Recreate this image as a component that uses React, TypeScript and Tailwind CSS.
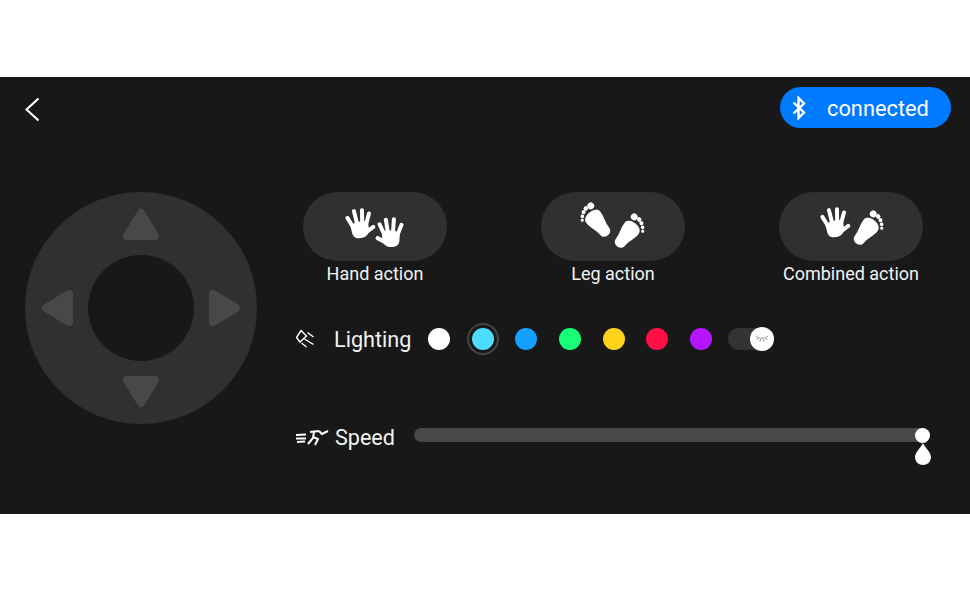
import React from "react";

const colors = ["#ffffff", "#4ddcff", "#14a0ff", "#17ff78", "#ffd21a", "#ff0f45", "#b414ff"];

const Hand = ({ x, y, flip = false, r = 0 }: { x: number; y: number; flip?: boolean; r?: number }) => (
  <g transform={`translate(${x} ${y}) rotate(${r}) scale(${flip ? -1 : 1} 1)`}>
    <path d="M-8 1 C-8 -2 9 -3 10 1 L10 8 C10 13 6 15 1 15 C-3 15 -5 13 -7 10 Z" fill="#fff" />
    <g stroke="#fff" strokeWidth="4" strokeLinecap="round" fill="none">
      <path d="M-6 2 L-11 -7" />
      <path d="M-2 1 L-5 -12" />
      <path d="M3 1 L3 -13" />
      <path d="M7.5 3 L11 -8" />
      <path d="M-5 10 L-12 7" />
    </g>
  </g>
);

const Foot = ({ x, y, flip = false, r = 38 }: { x: number; y: number; flip?: boolean; r?: number }) => (
  <g transform={`translate(${x} ${y}) scale(${flip ? -1 : 1} 1) rotate(${r})`} fill="#fff">
    <path d="M-9 -6 C-9 -14 9 -14 9 -6 C9 2 5.5 6 5.5 12 C5.5 19 -6 19 -6 12 C-6 6 -9 0 -9 -6 Z" />
    <circle cx="-5" cy="-16.5" r="3.4" />
    <circle cx="0.5" cy="-17.5" r="2.3" />
    <circle cx="4.5" cy="-16" r="2" />
    <circle cx="8" cy="-13.5" r="1.8" />
    <circle cx="10.5" cy="-10.5" r="1.6" />
  </g>
);

const Action = ({ label, children }: { label: string; children: React.ReactNode }) => (
  <div className="flex w-[144px] flex-col items-center">
    <div className="h-[69px] w-[144px] rounded-full bg-[#303030]">
      <svg width="144" height="69" viewBox="0 0 144 69">
        {children}
      </svg>
    </div>
    <span className="mt-[1px] whitespace-nowrap text-[18px] leading-[24px] text-[#f2f2f2]">{label}</span>
  </div>
);

const Joystick = () => (
  <div className="relative h-[232px] w-[232px] shrink-0 rounded-full bg-[#303030]">
    <svg className="absolute inset-0" width="232" height="232" viewBox="0 0 232 232">
      <g fill="#484848" stroke="#484848" strokeWidth="8" strokeLinejoin="round">
        <path d="M116 21 L130 44 L102 44 Z" />
        <path d="M116 211 L130 188 L102 188 Z" />
        <path d="M21 116 L44 102 L44 130 Z" />
        <path d="M211 116 L188 102 L188 130 Z" />
      </g>
    </svg>
    <div className="absolute left-[63px] top-[63px] h-[106px] w-[106px] rounded-full bg-[#181818]" />
  </div>
);

export default function App() {
  return (
    <div className="h-[600px] bg-white pt-[77px] font-['Roboto',sans-serif]">
      <div className="flex h-[437px] flex-col bg-[#181818] pl-[25px] pr-[19px]">
        <div className="flex h-[115px] items-start justify-between pt-[10px]">
          <svg className="mt-[10px]" width="15" height="25" viewBox="0 0 15 25" fill="none">
            <path d="M13.5 1.5 L1.5 12.5 L13.5 23.5" stroke="#fff" strokeWidth="2.2" />
          </svg>
          <div className="flex h-[41px] w-[171px] items-center rounded-full bg-[#007aff] pl-[12px] text-[21.8px] text-white">
            <svg width="14" height="24" viewBox="0 0 14 24" fill="none">
              <path d="M1.5 6.5 L12 16.5 L6.5 22 L6.5 2 L12 7.5 L1.5 17.5" stroke="#fff" strokeWidth="2.4" />
            </svg>
            <span className="ml-[21px] pt-[3px]">connected</span>
          </div>
        </div>
        <div className="flex">
          <Joystick />
          <div className="ml-[38px] flex flex-col">
            <div className="ml-[8px] flex gap-[94px]">
              <Action label="Hand action">
                <Hand x={57} y={31} flip r={-14} />
                <Hand x={87} y={40} r={4} />
              </Action>
              <Action label="Leg action">
                <Foot x={56} y={30} flip />
                <Foot x={87} y={41} />
              </Action>
              <Action label="Combined action">
                <Hand x={56} y={30} flip r={-14} />
                <Foot x={88} y={38} />
              </Action>
            </div>
            <div className="mt-[36px] flex h-[34px] items-center">
              <svg className="ml-[1px]" width="20" height="20" viewBox="0 0 20 20" fill="none" stroke="#fff" strokeWidth="1.4">
                <path d="M0.5 8.5 L5 1.5 L10.5 7 L4 13 Z" strokeLinejoin="round" />
                <path d="M11.5 3.5 L17.5 8 M8.5 10 L17.5 15.5 M5.5 14 L10.5 18" />
              </svg>
              <span className="ml-[18px] w-[94px] pt-[2px] text-[21.6px] text-[#f2f2f2]">Lighting</span>
              <div className="flex items-center gap-[21.7px]">
                {colors.map((c, i) => (
                  <span
                    key={c}
                    className={i === 1 ? "h-[22px] w-[22px] rounded-full outline-2 outline-offset-[3px] outline-[#444]" : "h-[22px] w-[22px] rounded-full"}
                    style={{ backgroundColor: c }}
                  />
                ))}
              </div>
              <div className="relative ml-[16px] h-[22px] w-[46px] rounded-full bg-[#333]">
                <div className="absolute right-0 top-[-1px] flex h-[24px] w-[24px] items-center justify-center rounded-full bg-white">
                  <svg width="14" height="10" viewBox="0 0 14 10" fill="none" stroke="#999" strokeWidth="1">
                    <path d="M1 2 C4 5 10 5 13 2 M3 4 L2 6 M5.5 5 L5 7.5 M8.5 5 L9 7.5 M11 4 L12 6" />
                  </svg>
                </div>
              </div>
            </div>
            <div className="mt-[67px] flex items-start">
              <div className="flex h-[29px] w-[100px] items-center">
                <svg className="ml-[1px]" width="33" height="18" viewBox="0 0 33 18" fill="none" stroke="#fff" strokeWidth="2">
                  <path d="M0 6 L10 5.5 M0 9.5 L10 9.5 M1 13 L9 12.5" />
                  <path d="M14 3 L23 2 M18 3 L17 9 L12 15 M17 8 L22 10 L19 16 M23 2 L26 5 L32 2" />
                </svg>
                <span className="ml-[6px] pt-[2px] text-[21.6px] text-[#f2f2f2]">Speed</span>
              </div>
              <div className="relative ml-[19px] mt-[5px] h-[14px] w-[516px] rounded-full bg-[#484848]">
                <div className="absolute right-0 top-0 h-[15px] w-[15px] rounded-full bg-white" />
                <svg className="absolute right-[-2px] top-[15px]" width="18" height="23" viewBox="0 0 18 23">
                  <path d="M9 0 C11 5 17 9 17 14 C17 19 13 22 9 22 C5 22 1 19 1 14 C1 9 7 5 9 0 Z" fill="#fff" />
                </svg>
              </div>
            </div>
          </div>
        </div>
      </div>
    </div>
  );
}
